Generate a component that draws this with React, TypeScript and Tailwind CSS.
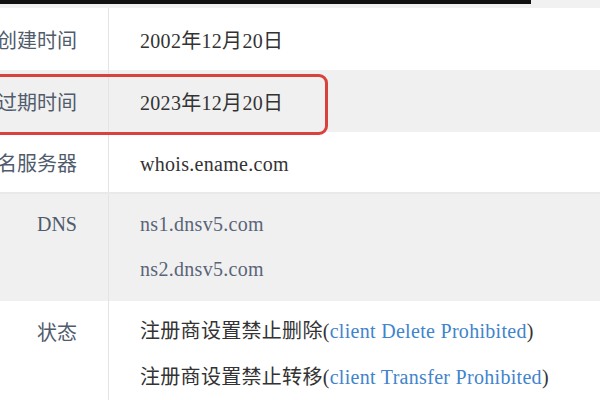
export default function App() {
  const label = "w-[109px] shrink-0 border-r border-[#e4e4e4] pr-[31px] text-right text-[20px] text-[#505b6c]";
  const cell = "pl-[31px] text-[20px] tracking-[0.3px]";
  return (
    <div className="relative h-[400px] w-[600px] overflow-hidden bg-white font-['Liberation_Serif','Noto_Sans_CJK_SC',serif]">
      <div className="flex h-[8px] bg-[#f1f1f1]">
        <div className="h-[4px] w-[531px] bg-[#111]" />
      </div>
      <div className="flex h-[62px] bg-white">
        <div className={`${label} flex h-full items-center justify-end whitespace-nowrap pt-[4px]`}>创建时间</div>
        <div className={`${cell} flex items-center pt-[4px] text-[#333]`}>2002年12月20日</div>
      </div>
      <div className="flex h-[62px] bg-[#f0f0f0]">
        <div className={`${label} flex h-full items-center justify-end whitespace-nowrap pt-[4px]`}>过期时间</div>
        <div className={`${cell} flex items-center pt-[4px] text-[#333]`}>2023年12月20日</div>
      </div>
      <div className="flex h-[62px] border-b-2 border-[#e9e9e9] bg-white">
        <div className={`${label} flex h-full items-center justify-end whitespace-nowrap pt-[4px]`}>名服务器</div>
        <div className={`${cell} flex items-center pt-[4px] text-[#333]`}>whois.ename.com</div>
      </div>
      <div className="flex h-[107px] bg-[#f0f0f0]">
        <div className={`${label} h-full pt-[20px] leading-[20px]`}>DNS</div>
        <div className={`${cell} flex flex-col gap-[25px] pt-[20px] leading-[20px] text-[#5a6478]`}>
          <span>ns1.dnsv5.com</span>
          <span>ns2.dnsv5.com</span>
        </div>
      </div>
      <div className="flex h-[120px] bg-white">
        <div className={`${label} h-full pt-[22px] leading-[20px]`}>状态</div>
        <div className={`${cell} flex flex-col gap-[26px] pt-[20px] leading-[20px] text-[#333]`}>
          <span className="whitespace-nowrap">
            注册商设置禁止删除(<span className="text-[#3f84cc]">client Delete Prohibited</span>)
          </span>
          <span className="whitespace-nowrap">
            注册商设置禁止转移(<span className="text-[#3f84cc]">client Transfer Prohibited</span>)
          </span>
        </div>
      </div>
      <div className="absolute left-[-20px] top-[74px] h-[61px] w-[348px] rounded-[9px] border-[3px] border-[#d9413d]" />
    </div>
  );
}
